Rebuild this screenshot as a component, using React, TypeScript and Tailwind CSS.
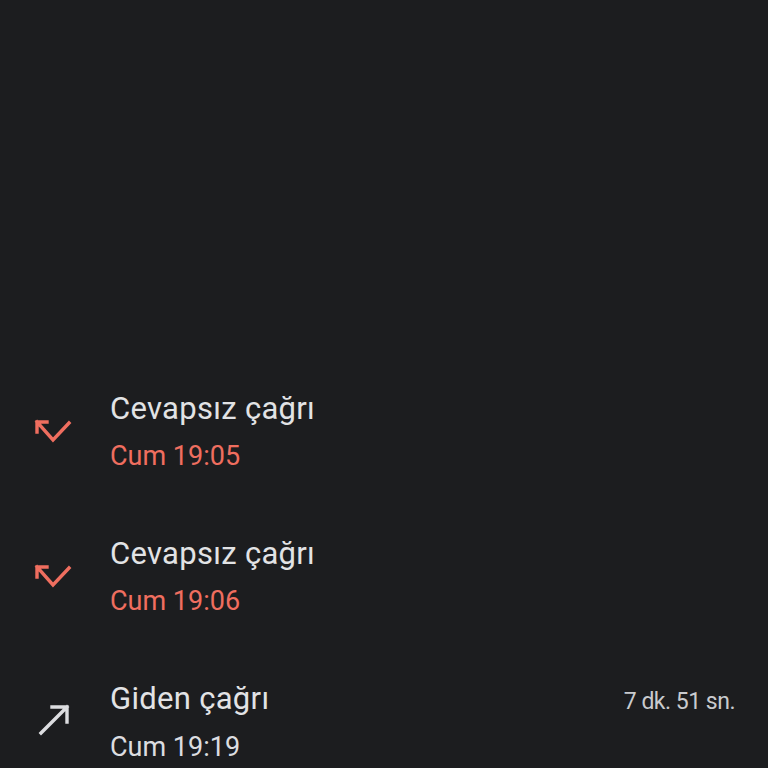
import React from 'react';

type Call = {
  kind: 'missed' | 'outgoing';
  title: string;
  time: string;
  duration?: string;
};

const calls: Call[] = [
  { kind: 'missed', title: 'Cevapsız çağrı', time: 'Cum 19:05' },
  { kind: 'missed', title: 'Cevapsız çağrı', time: 'Cum 19:06' },
  { kind: 'outgoing', title: 'Giden çağrı', time: 'Cum 19:19', duration: '7 dk. 51 sn.' },
];

function MissedIcon() {
  return (
    <svg width="40" height="32" viewBox="0 0 40 32" fill="none" stroke="#ef6e5f" strokeWidth="3.4" strokeLinecap="square">
      <path d="M4 6 L14 6 M4 6 L4 16 M4 6 L20 24 L36 7" strokeLinejoin="miter" />
    </svg>
  );
}

function OutgoingIcon() {
  return (
    <svg width="40" height="36" viewBox="0 0 40 36" fill="none" stroke="#dcdde0" strokeWidth="3.4" strokeLinecap="square">
      <path d="M8 31 L34 5 M19 5 L34 5 L34 20" strokeLinejoin="miter" />
    </svg>
  );
}

export default function App() {
  return (
    <div
      className="h-screen w-full overflow-hidden bg-[#1c1d1f] pt-[389px]"
      style={{ fontFamily: 'Roboto, "Noto Sans", sans-serif' }}
    >
      {calls.map((c, i) => (
        <div key={i} className="flex h-[145px] items-start">
          <div
            className={
              c.kind === 'missed'
                ? 'flex w-[110px] shrink-0 justify-start pl-[33px] pt-[27px]'
                : 'flex w-[110px] shrink-0 justify-start pl-[33px] pt-[23px]'
            }
          >
            {c.kind === 'missed' ? <MissedIcon /> : <OutgoingIcon />}
          </div>
          <div className="flex flex-1 flex-col">
            <div className="flex items-baseline justify-between pr-[33px]">
              <span className="text-[31px] leading-[40px] tracking-[0.3px] text-[#e2e3e5]">{c.title}</span>
              {c.duration && (
                <span className="text-[23px] tracking-[-0.5px] text-[#c9cbce]">{c.duration}</span>
              )}
            </div>
            <span
              className={
                c.kind === 'missed'
                  ? 'mt-[9px] text-[27px] leading-[36px] text-[#ef6e5f]'
                  : 'mt-[9px] text-[27px] leading-[36px] text-[#dcdde0]'
              }
            >
              {c.time}
            </span>
          </div>
        </div>
      ))}
    </div>
  );
}
